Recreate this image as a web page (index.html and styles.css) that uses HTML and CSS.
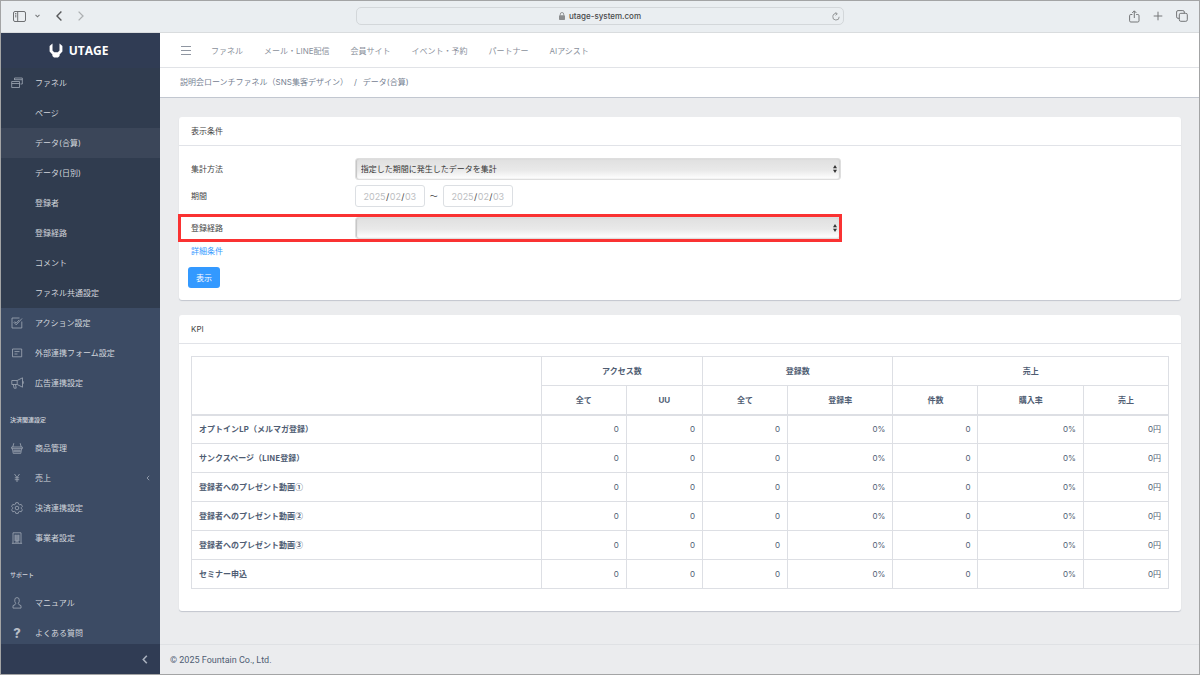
FILE: index.html
```html
<!DOCTYPE html>
<html lang="ja">
<head>
<meta charset="utf-8">
<meta name="viewport" content="width=device-width, initial-scale=1">
<title>データ(合算) | UTAGE</title>
<link rel="stylesheet" href="styles.css">
</head>
<body>
<div class="window">
  <div class="browser-bar">
    <div class="browser-left">
      <button class="icon-btn" type="button" aria-label="サイドバー"><svg width="13" height="11" viewBox="0 0 13 11" fill="none" stroke="#6e7072"><rect x="0.5" y="0.5" width="12" height="10" rx="1.5"/><path d="M4.7 0.5v10M2 2.6h1.4M2 4.2h1.4M2 5.8h1.4"/></svg></button>
      <button class="icon-btn icon-btn-menu" type="button" aria-label="タブグループ"><svg width="5" height="4" viewBox="0 0 5 4" fill="none" stroke="#77797b" stroke-width="1.1"><path d="M0.5 0.8l2 2 2-2"/></svg></button>
      <button class="icon-btn icon-btn-back" type="button" aria-label="戻る"><svg width="6" height="10" viewBox="0 0 6 10" fill="none" stroke="#58595b" stroke-width="1.4"><path d="M5.4 0.6L1 5l4.4 4.4"/></svg></button>
      <button class="icon-btn" type="button" aria-label="進む"><svg width="6" height="10" viewBox="0 0 6 10" fill="none" stroke="#adb0b2" stroke-width="1.3"><path d="M0.6 0.6L5 5 0.6 9.4"/></svg></button>
    </div>
    <div class="address">
      <span class="address-text"><svg width="6" height="8" viewBox="0 0 6 8" fill="#8b8d8f"><rect x="0" y="3.3" width="6" height="4.7" rx="0.8"/><path d="M1.3 3.6V2.2a1.7 1.7 0 0 1 3.4 0v1.4" fill="none" stroke="#8b8d8f" stroke-width="0.9"/></svg>utage-system.com</span>
      <button class="icon-btn" type="button" aria-label="再読み込み"><svg width="8" height="9" viewBox="0 0 8 9" fill="none" stroke="#8b8d8f" stroke-width="0.9"><path d="M4.6 1.7A3.2 3.2 0 1 0 7.2 4.8M3.4 0.3l1.9 1.5-1.7 1.6"/></svg></button>
    </div>
    <div class="browser-right">
      <button class="icon-btn" type="button" aria-label="共有"><svg width="11" height="13" viewBox="0 0 11 13" fill="none" stroke="#747678"><path d="M3.4 4.5H1.8a1.2 1.2 0 0 0-1.2 1.2v5.1A1.2 1.2 0 0 0 1.8 12h7a1.2 1.2 0 0 0 1.2-1.2V5.7a1.2 1.2 0 0 0-1.2-1.2H7.2M5.3 8V1M3.2 3l2.1-2.2L7.4 3"/></svg></button>
      <button class="icon-btn" type="button" aria-label="新規タブ"><svg width="10" height="10" viewBox="0 0 10 10" stroke="#747678"><path d="M5 0.7v8.6M0.7 5h8.6"/></svg></button>
      <button class="icon-btn" type="button" aria-label="タブ一覧"><svg width="12" height="12" viewBox="0 0 12 12" fill="none" stroke="#747678"><rect x="3.3" y="3.3" width="8" height="8" rx="1.5"/><path d="M3.3 8.3H2A1.4 1.4 0 0 1 .6 6.9V2A1.4 1.4 0 0 1 2 .6h4.9A1.4 1.4 0 0 1 8.3 2v1.3"/></svg></button>
    </div>
  </div>

  <div class="app">
    <aside class="sidebar">
      <a class="brand" href="#"><svg width="14" height="15" viewBox="0 0 14 15" fill="#fff"><path d="M3.500 0.500L0.600 3v5.400L3.400 11.600V13L5 14.500h4L10.600 13v-1.400L13.400 8.400V3L10.500.5v7L8.800 9.200H5.200L3.500 7.500z"/></svg>UTAGE</a>
      <nav class="side-nav">
        <div class="side-group">
          <a class="side-link" href="#"><span class="side-icon"><svg width="12" height="12" viewBox="0 0 12 12"><path d="M3.500 3V1h7.800v6H9.500M3.500 2.700h7.800M.7 4.500h7.800v6H.7zM.7 6.500h7.800"/></svg></span>ファネル</a>
          <a class="side-link" href="#"><span class="side-icon"></span>ページ</a>
          <a class="side-link active" href="#"><span class="side-icon"></span>データ(合算)</a>
          <a class="side-link" href="#"><span class="side-icon"></span>データ(日別)</a>
          <a class="side-link" href="#"><span class="side-icon"></span>登録者</a>
          <a class="side-link" href="#"><span class="side-icon"></span>登録経路</a>
          <a class="side-link" href="#"><span class="side-icon"></span>コメント</a>
          <a class="side-link" href="#"><span class="side-icon"></span>ファネル共通設定</a>
        </div>
        <a class="side-link" href="#"><span class="side-icon"><svg width="12" height="12" viewBox="0 0 12 12"><path d="M8.500 1H1v10h9.800V4.500M3 5.500l2.200 2.300L11 1.500M3 5.500l.8-.8 1.400 1.400 3-3.200"/></svg></span>アクション設定</a>
        <a class="side-link" href="#"><span class="side-icon"><svg width="12" height="12" viewBox="0 0 12 12"><path d="M1.500 2h9.200v7.800H1.500zM3.500 4.600h5M3.500 7h3"/></svg></span>外部連携フォーム設定</a>
        <a class="side-link" href="#"><span class="side-icon"><svg width="13" height="12" viewBox="0 0 13 12"><path d="M.8 3.500h5.400L11.500.8v9.400L6.200 7.500H.8zM6.200 3.500v4M2.300 7.500l.8 3.700h2.100l-.7-3.700M12.300 4.300v2.400"/></svg></span>広告連携設定</a>
        <h2 class="side-title">決済関連設定</h2>
        <a class="side-link" href="#"><span class="side-icon"><svg width="12" height="12" viewBox="0 0 12 12"><path d="M.7 5h10.600v1.700H.7zM1.500 6.700l.7 4.600h7.600l.7-4.600M1.800 5l1-3.800M10.200 5l-1-3.800M4 7.500v3M6 7.500v3M8 7.500v3M2 9h8"/></svg></span>商品管理</a>
        <a class="side-link" href="#"><span class="side-icon"><svg width="12" height="12" viewBox="0 0 12 12"><path d="M3.500 2L6 5.500 8.500 2M6 5.500V10M3.800 5.800h4.400M3.800 7.700h4.400"/></svg></span>売上<svg class="side-caret" width="4" height="6" viewBox="0 0 4 6"><path d="M3.200.8L1 3l2.200 2.200"/></svg></a>
        <a class="side-link" href="#"><span class="side-icon"><svg width="12" height="12" viewBox="0 0 12 12"><path d="M4.800.7h2.400l.4 1.500 1.100.6 1.500-.4 1.200 2-1.100 1.100v1.200l1.100 1-1.200 2.100-1.500-.5-1.100.6-.4 1.500H4.800l-.4-1.500-1.100-.6-1.500.5L.6 7.700l1.100-1V5.500L.6 4.400l1.200-2 1.500.4 1.100-.6z"/><circle cx="6" cy="6" r="1.800"/></svg></span>決済連携設定</a>
        <a class="side-link" href="#"><span class="side-icon"><svg width="12" height="12" viewBox="0 0 12 12"><path d="M2 11.300V.8h8v10.500M.9 11.300h10.200M4.200 2.500v6.500M6 2.500v6.500M7.800 2.500v6.500M3.500 4h5M3.500 6h5M3.500 8h5M5 11v-2h2v2"/></svg></span>事業者設定</a>
        <h2 class="side-title">サポート</h2>
        <a class="side-link" href="#"><span class="side-icon"><svg width="12" height="12" viewBox="0 0 12 12"><path d="M4.700 6.500L3.800 4.500V2.800a2.200 2.200 0 0 1 4.400 0v1.700L7.300 6.500 8 7.700l2 .9v2.500H2V8.600l2-.9z"/></svg></span>マニュアル</a>
        <a class="side-link" href="#"><span class="side-icon"><span class="question">?</span></span>よくある質問</a>
      </nav>
      <button class="side-minimizer" type="button" aria-label="メニューを閉じる"><svg width="6" height="9" viewBox="0 0 6 9" fill="none" stroke="#a9b0bd" stroke-width="1.6"><path d="M4.800.8L1.300 4.500l3.500 3.700"/></svg></button>
    </aside>

    <div class="page">
      <header class="topbar">
        <button class="icon-btn" type="button" aria-label="メニュー"><svg width="10" height="9" viewBox="0 0 10 9" stroke="#8f96a1"><path d="M0 .5h10M0 4.500h10M0 8.500h10"/></svg></button>
        <nav class="top-nav">
          <a href="#">ファネル</a>
          <a href="#">メール・LINE配信</a>
          <a href="#">会員サイト</a>
          <a href="#">イベント・予約</a>
          <a href="#">パートナー</a>
          <a href="#">AIアシスト</a>
        </nav>
      </header>
      <nav class="breadcrumb" aria-label="パンくず">
        <a href="#">説明会ローンチファネル（SNS集客デザイン）</a><span>/</span><span>データ(合算)</span>
      </nav>

      <main class="content">
        <section class="card">
          <h1 class="card-header">表示条件</h1>
          <form class="card-body">
            <div class="form-row">
              <label for="method">集計方法</label>
              <div class="select">
                <select id="method"><option>指定した期間に発生したデータを集計</option></select>
                <svg class="select-arrow" width="4" height="8" viewBox="0 0 4 8"><path d="M0 3.200L2 0l2 3.200zM0 4.800L2 8l2-3.200z"/></svg>
              </div>
            </div>
            <div class="form-row">
              <label for="from-year">期間</label>
              <div class="period">
                <div class="date"><input class="year" id="from-year" value="2025" aria-label="開始年"><span>/</span><input value="02" aria-label="開始月"><span>/</span><input value="03" aria-label="開始日"></div>
                <span>〜</span>
                <div class="date"><input class="year" value="2025" aria-label="終了年"><span>/</span><input value="02" aria-label="終了月"><span>/</span><input value="03" aria-label="終了日"></div>
              </div>
            </div>
            <div class="form-row marked">
              <label for="route">登録経路</label>
              <div class="select">
                <select id="route"><option></option></select>
                <svg class="select-arrow" width="4" height="8" viewBox="0 0 4 8"><path d="M0 3.200L2 0l2 3.200zM0 4.800L2 8l2-3.200z"/></svg>
              </div>
            </div>
            <a class="more" href="#">詳細条件</a>
            <button class="submit" type="button">表示</button>
          </form>
        </section>

        <section class="card">
          <h2 class="card-header">KPI</h2>
          <div class="card-body">
            <table class="kpi">
              <colgroup><col class="c-name"><col class="c-count"><col class="c-uu"><col class="c-count"><col class="c-rate"><col class="c-count"><col class="c-rate"><col class="c-count"></colgroup>
              <thead>
                <tr><th rowspan="2"></th><th colspan="2">アクセス数</th><th colspan="2">登録数</th><th colspan="3">売上</th></tr>
                <tr><th>全て</th><th>UU</th><th>全て</th><th>登録率</th><th>件数</th><th>購入率</th><th>売上</th></tr>
              </thead>
              <tbody>
                <tr><th>オプトインLP（メルマガ登録）</th><td>0</td><td>0</td><td>0</td><td>0%</td><td>0</td><td>0%</td><td>0円</td></tr>
                <tr><th>サンクスページ（LINE登録）</th><td>0</td><td>0</td><td>0</td><td>0%</td><td>0</td><td>0%</td><td>0円</td></tr>
                <tr><th>登録者へのプレゼント動画①</th><td>0</td><td>0</td><td>0</td><td>0%</td><td>0</td><td>0%</td><td>0円</td></tr>
                <tr><th>登録者へのプレゼント動画②</th><td>0</td><td>0</td><td>0</td><td>0%</td><td>0</td><td>0%</td><td>0円</td></tr>
                <tr><th>登録者へのプレゼント動画③</th><td>0</td><td>0</td><td>0</td><td>0%</td><td>0</td><td>0%</td><td>0円</td></tr>
                <tr><th>セミナー申込</th><td>0</td><td>0</td><td>0</td><td>0%</td><td>0</td><td>0%</td><td>0円</td></tr>
              </tbody>
            </table>
          </div>
        </section>
      </main>
      <footer class="footer">© 2025 Fountain Co., Ltd.</footer>
    </div>
  </div>
</div>
</body>
</html>
```

FILE: styles.css
```css
*, *::after { box-sizing: border-box; }

body {
  margin: 0;
  font-family: Inter, "Noto Sans CJK JP", sans-serif;
  font-size: 8px;
  line-height: 12px;
  color: #4f5d73;
}

a { color: inherit; text-decoration: none; }
h1, h2 { margin: 0; font-weight: 400; }
button, input, select { font: inherit; color: inherit; }
svg { display: block; flex: none; }

.icon-btn {
  display: flex;
  padding: 0;
  border: 0;
  background: none;
}

.window {
  display: flex;
  flex-direction: column;
  height: 100vh;
  border: 1px solid #a3a4a5;
}

/* Browser toolbar */
.browser-bar {
  display: grid;
  grid-template-columns: 1fr minmax(200px, 488px) 1fr;
  align-items: center;
  flex: none;
  height: 32px;
  padding: 0 11px 1px;
  background: #eaeef1;
  border-bottom: 1px solid #d9dcde;
}
.browser-left, .browser-right { display: flex; align-items: center; }
.browser-left { gap: 16px; padding-left: 1px; }
.browser-right { gap: 13px; justify-content: flex-end; }
.icon-btn-menu { margin-left: -7px; }
.address {
  display: flex;
  align-items: center;
  height: 18px;
  padding: 0 3px 0 11px;
  border: 1px solid #d3d7da;
  border-radius: 5px;
  color: #48494b;
}
.address-text {
  display: flex;
  align-items: center;
  justify-content: center;
  gap: 4px;
  flex: 1;
  font-weight: 500;
}

/* Shell */
.app { display: flex; flex: 1; min-height: 0; }

.sidebar {
  display: flex;
  flex-direction: column;
  flex: none;
  width: 159px;
  background: #3c4b64;
  color: #d2d6dc;
}
.brand {
  display: flex;
  align-items: center;
  justify-content: center;
  gap: 6px;
  flex: none;
  height: 35px;
  padding-right: 4px;
  background: #303c54;
  color: #fff;
  font-family: "Open Sans", sans-serif;
  font-size: 12px;
  font-weight: 700;
}
.side-nav { flex: 1; min-height: 0; overflow: hidden; }
.side-group { background: #303c4f; }
.side-link {
  display: flex;
  align-items: center;
  gap: 12px;
  height: 30px;
  padding: 0 10px;
}
.side-link.active { background: #3b4659; }
.side-icon {
  display: flex;
  justify-content: center;
  flex: none;
  width: 12px;
}
.side-icon svg, .side-caret { fill: none; stroke: #a1a9b6; stroke-width: 0.8; }
.side-caret { margin-left: auto; }
.question { font-size: 13px; font-weight: 800; color: #b7bdc7; }
.side-title {
  height: 35px;
  padding: 16px 9px 7px;
  font-size: 6px;
  font-weight: 500;
}
.side-minimizer {
  display: flex;
  align-items: center;
  justify-content: flex-end;
  flex: none;
  height: 30px;
  padding: 0 12px 0 0;
  border: 0;
  background: #303c54;
}

.page {
  display: flex;
  flex-direction: column;
  flex: 1;
  min-width: 0;
  background: #ebecee;
}
.topbar {
  display: flex;
  align-items: center;
  gap: 20px;
  flex: none;
  height: 35px;
  padding: 1px 21px 0;
  background: #fff;
  border-bottom: 1px solid #e1e3e7;
  color: #8a909b;
}
.top-nav { display: flex; gap: 21px; }
.breadcrumb {
  display: flex;
  align-items: center;
  gap: 6px;
  flex: none;
  height: 30px;
  padding: 0 20px 1px;
  background: #fff;
  border-bottom: 1px solid #c2c7d0;
  color: #768192;
}
.content {
  display: flex;
  flex-direction: column;
  gap: 15px;
  flex: 1;
  min-height: 0;
  padding: 19px 18px 0 19px;
  overflow: auto;
}
.footer {
  flex: none;
  padding: 9px 10px 8px;
  border-top: 1px solid #dfe1e4;
  font-family: Roboto, sans-serif;
  font-size: 9px;
}

/* Cards */
.card {
  flex: none;
  background: #fff;
  border-radius: 3px;
  box-shadow: 0 1px 1px #c2c6ce;
}
.card-header {
  padding: 8px 12px;
  border-bottom: 1px solid #e1e3e8;
  font-size: 8px;
  color: #444;
}
.card-body { padding: 12px; }

/* Search form */
.form-row {
  position: relative;
  display: grid;
  grid-template-columns: 34fr 101fr 68fr;
  align-items: center;
  margin-bottom: 5px;
  color: #444;
}
.marked { margin: 10px 0 4px; }
.marked::after {
  content: "";
  position: absolute;
  top: -3px;
  bottom: -3px;
  left: -13px;
  width: calc(66.5% + 14px);
  border: 3px solid #fa3232;
  pointer-events: none;
}
.select { position: relative; }
.select select {
  display: block;
  width: 100%;
  height: 22px;
  padding: 0 5px;
  appearance: none;
  border: 1px solid #dedede;
  border-radius: 3px;
  background: linear-gradient(#e0e0e0, #e9e9e9 55%, #fff);
  box-shadow: inset 1px 0 1px #c4c4c4, inset -1px 0 1px #d2d2d2;
  color: #333;
}
.select-arrow {
  position: absolute;
  top: 7px;
  right: 4px;
  fill: #333;
  pointer-events: none;
}
.period { display: flex; align-items: center; gap: 5px; }
.date {
  display: flex;
  align-items: center;
  justify-content: center;
  width: 70px;
  height: 22px;
  padding-top: 1px;
  border: 1px solid #dcdfe3;
  border-radius: 3px;
  font-size: 9px;
}
.date input {
  width: 12px;
  padding: 0;
  border: 0;
  background: none;
  text-align: center;
  color: #bcbec2;
}
.date .year { width: 23px; }
.more { display: block; line-height: 16px; color: #3399ff; }
.submit {
  display: block;
  height: 21px;
  margin: 8px 0 0 -3px;
  padding: 0 8px;
  border: 0;
  border-radius: 3px;
  background: #3399ff;
  color: #fff;
}

/* KPI table */
.kpi {
  width: 100%;
  margin-bottom: 10px;
  border-collapse: collapse;
  table-layout: fixed;
}
.kpi th, .kpi td {
  height: 29px;
  padding: 0 7px;
  border: 1px solid #dddfe4;
}
.kpi td { text-align: right; }
.kpi th { font-weight: 700; }
.kpi tbody th { text-align: left; font-family: "Noto Sans CJK JP", sans-serif; }
.kpi thead tr + tr th { border-top-color: #cdd1d8; }
.kpi thead { border-bottom: 2px solid #dddfe4; }
.c-name { width: 35.8%; }
.c-uu { width: 7.8%; }
.c-count { width: 8.7%; }
.c-rate { width: 10.8%; }
```
